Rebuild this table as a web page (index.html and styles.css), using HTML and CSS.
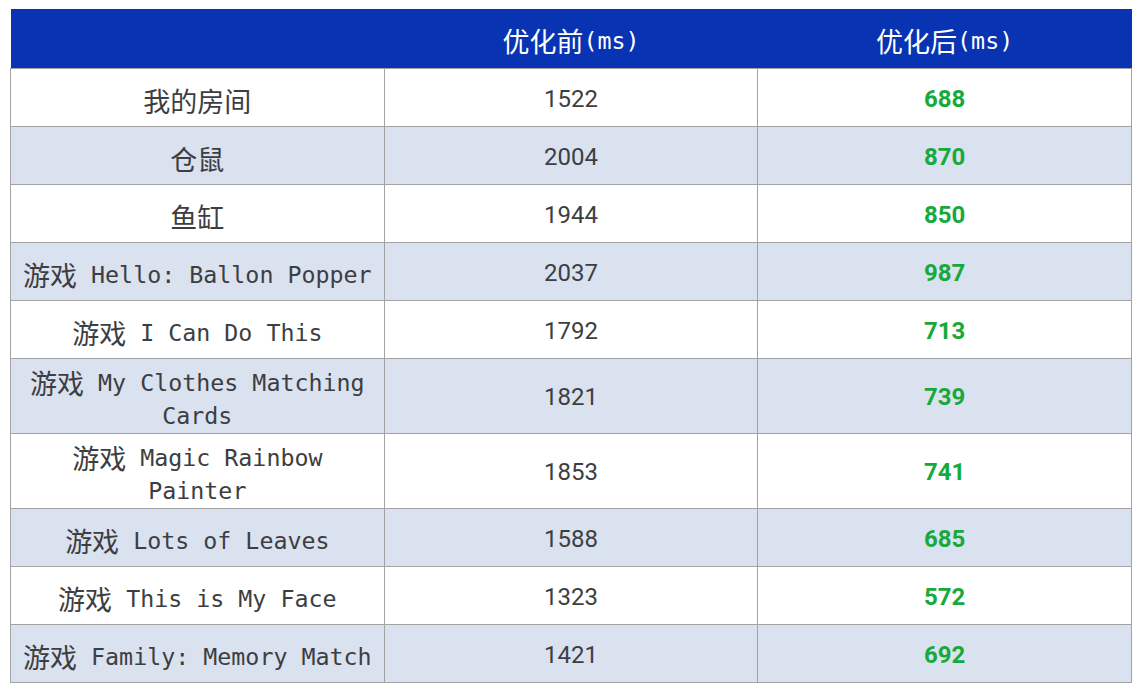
FILE: index.html
```html
<!DOCTYPE html>
<html lang="zh-CN">
<head>
<meta charset="utf-8">
<title>优化对比</title>
<link rel="stylesheet" href="styles.css">
</head>
<body>
<table class="perf">
  <thead>
    <tr class="head-row">
      <th class="col-name"></th>
      <th class="col-num"><span class="cjk">优化前</span>(ms)</th>
      <th class="col-num"><span class="cjk">优化后</span>(ms)</th>
    </tr>
  </thead>
  <tbody>
    <tr><td class="name"><span class="cjk">我的房间</span></td><td class="before">1522</td><td class="after">688</td></tr>
    <tr class="alt"><td class="name"><span class="cjk">仓鼠</span></td><td class="before">2004</td><td class="after">870</td></tr>
    <tr><td class="name"><span class="cjk">鱼缸</span></td><td class="before">1944</td><td class="after">850</td></tr>
    <tr class="alt"><td class="name"><span class="cjk">游戏</span> Hello: Ballon Popper</td><td class="before">2037</td><td class="after">987</td></tr>
    <tr><td class="name"><span class="cjk">游戏</span> I Can Do This</td><td class="before">1792</td><td class="after">713</td></tr>
    <tr class="alt"><td class="name"><span class="cjk">游戏</span> My Clothes Matching Cards</td><td class="before">1821</td><td class="after">739</td></tr>
    <tr><td class="name"><span class="cjk">游戏</span> Magic Rainbow Painter</td><td class="before">1853</td><td class="after">741</td></tr>
    <tr class="alt"><td class="name"><span class="cjk">游戏</span> Lots of Leaves</td><td class="before">1588</td><td class="after">685</td></tr>
    <tr><td class="name"><span class="cjk">游戏</span> This is My Face</td><td class="before">1323</td><td class="after">572</td></tr>
    <tr class="alt"><td class="name"><span class="cjk">游戏</span> Family: Memory Match</td><td class="before">1421</td><td class="after">692</td></tr>
  </tbody>
</table>
</body>
</html>
```
FILE: styles.css
```css
html, body {
  background: #ffffff;
}
body {
  margin: 9px 8px 0 10px;
}
.perf {
  width: 1122px;
  border-collapse: collapse;
  table-layout: fixed;
}
.perf th {
  background: #0833b2;
  color: #ffffff;
  font-family: "DejaVu Sans Mono", "Noto Sans CJK SC", monospace;
  font-weight: normal;
  font-size: 23.3px;
  line-height: 33px;
  height: 59px;
  box-sizing: border-box;
  padding: 5px 8px 0;
  text-align: center;
  vertical-align: middle;
  border: none;
}
.perf td {
  border: 1px solid #a3a3a3;
  font-size: 23.3px;
  line-height: 33px;
  height: 58px;
  padding: 7px 8px 1px;
  text-align: center;
  vertical-align: middle;
  color: #3c3e42;
  box-sizing: border-box;
}
.cjk {
  font-family: "Noto Sans CJK SC", sans-serif;
  font-size: 27px;
  line-height: 0;
  vertical-align: -3px;
}
.perf tbody tr {
  background: #ffffff;
}
.perf tbody tr.alt {
  background: #dae1ef;
}
.name {
  font-family: "DejaVu Sans Mono", "Noto Sans CJK SC", monospace;
}
.before {
  font-family: Roboto, "Noto Sans", sans-serif;
  font-size: 24px !important;
  padding-top: 6px !important;
  padding-bottom: 2px !important;
}
.after {
  font-family: Roboto, "Noto Sans", sans-serif;
  font-size: 24px !important;
  font-weight: bold;
  color: #17a93b !important;
  padding-top: 6px !important;
  padding-bottom: 2px !important;
}
```
